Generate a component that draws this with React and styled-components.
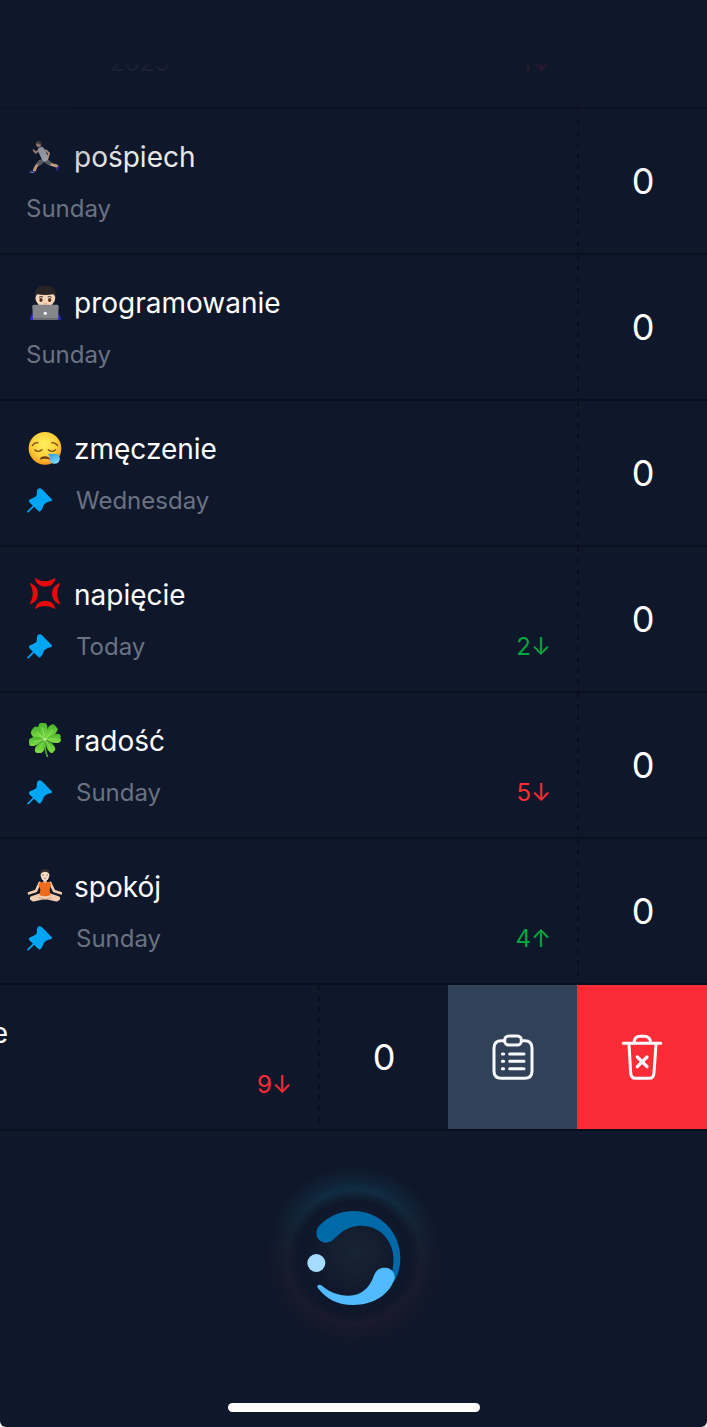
import React from "react"
import styled, { createGlobalStyle } from "styled-components"

const colors = {
  background: "#0f172a",
  line: "#080f1e",
  text: "#ffffff",
  muted: "#6a7282",
  blue: "#00a6f4",
  green: "#00a63e",
  red: "#fb2c36",
  slate: "#314158",
}

const GlobalStyle = createGlobalStyle`
  * {
    box-sizing: border-box;
  }
  body {
    margin: 0;
    background: #ffffff;
    font-family: Inter, "Liberation Sans", sans-serif;
  }
`

const Screen = styled.div`
  position: relative;
  display: flex;
  flex-direction: column;
  min-height: 100vh;
  overflow: hidden;
  background: ${colors.background};
  border-radius: 0 0 6px 6px;
`

const TopFade = styled.div`
  position: absolute;
  inset: 0 0 auto 0;
  height: 190px;
  pointer-events: none;
  background:
    radial-gradient(ellipse 120px 90px at 20px 110px, #0f172a70, #0f172a00),
    linear-gradient(#0f172a 63px, #0f172ae8 65px, #0f172ad8 76px, #0f172a70 110px, #0f172a20 150px, #0f172a00);
`

const List = styled.ul`
  list-style: none;
  margin: 0;
  padding: 0;
`

const Row = styled.li`
  display: flex;
  justify-content: flex-end;
  height: ${({ $peek }) => ($peek ? "109px" : "146px")};
  align-items: ${({ $peek }) => ($peek ? "flex-end" : "stretch")};
  overflow: hidden;
  border-bottom: 2px solid ${colors.line};
`

const Main = styled.div`
  flex: 1;
  display: flex;
  flex-direction: column;
  gap: 16px;
  padding: 30px 26px 27px ${({ $swiped }) => ($swiped ? "0" : "26px")};
`

const Title = styled.div`
  display: flex;
  align-items: center;
  gap: 12px;
  height: 36px;
  color: ${colors.text};
  font-size: 28px;
  font-weight: 400;
  line-height: 36px;
`

const ClippedTitle = styled(Title)`
  justify-content: flex-end;
  width: 8px;
`

const Details = styled.div`
  display: flex;
  align-items: center;
  gap: 24px;
  height: 35px;
  font-size: 24px;
  line-height: 35px;
`

const When = styled.span`
  color: ${colors.muted};
  padding-left: ${({ $indent }) => ($indent ? "84px" : "0")};
`

const Delta = styled.span`
  margin-left: auto;
  color: ${({ $good }) => ($good ? colors.green : colors.red)};
`

const Count = styled.div`
  flex: 0 0 130px;
  display: flex;
  align-items: center;
  justify-content: center;
  height: 144px;
  padding-left: 2px;
  color: ${colors.text};
  font-size: 36px;
  background: repeating-linear-gradient(${colors.line} 0 5px, transparent 5px 11px) 0 0 / 2px 100% no-repeat;
`

const Action = styled.button`
  flex: 0 0 ${({ $danger }) => ($danger ? "130px" : "129px")};
  display: flex;
  align-items: center;
  justify-content: center;
  padding: 0;
  border: 0;
  background: ${({ $danger }) => ($danger ? colors.red : colors.slate)};
`

const Emoji = styled.svg`
  flex: none;
  width: 36px;
  height: 36px;
`

const PinSvg = styled.svg`
  flex: none;
  width: 26px;
  height: 26px;
  fill: ${colors.blue};
`

const ActionIcon = styled.svg`
  width: 48px;
  height: 48px;
  fill: none;
  stroke: #f8fafc;
  stroke-width: 9;
  stroke-linecap: round;
  stroke-linejoin: round;
`

const Footer = styled.footer`
  flex: 1;
  display: flex;
  flex-direction: column;
  align-items: center;
  justify-content: space-between;
  padding: 19px 0 15px;
`

const OrbButton = styled.button`
  padding: 0;
  border: 0;
  background: none;
  svg {
    display: block;
    width: 210px;
    height: 200px;
  }
`

const HomeBar = styled.div`
  width: 252px;
  height: 9px;
  border-radius: 5px;
  background: #ffffff;
`

const Runner = () => (
  <Emoji viewBox="78 417 108 108">
    <g fill="none" strokeLinecap="round" strokeLinejoin="round">
      <path d="M121 447 L107 458 L101 451" stroke="#d3a685" strokeWidth="6" />
      <path d="M120 485 L108 500 L103 511" stroke="#e8b896" strokeWidth="9" />
      <path d="M139 483 L153 493 L170 498" stroke="#efbd98" strokeWidth="9" />
      <path d="M126 484 L118 490 M135 480 L147 489" stroke="#6d6e72" strokeWidth="13" />
      <path d="M124 451 L135 474" stroke="#c8ccd2" strokeWidth="20" />
      <path d="M137 451 L147 460 L143 472" stroke="#ecbc98" strokeWidth="6" />
      <path d="M91 514 L103 516 M170 510 L176 499" stroke="#3436a8" strokeWidth="5" />
      <path d="M91 517 L101 518" stroke="#b5b8c8" strokeWidth="2" />
    </g>
    <ellipse cx="116" cy="433" rx="8" ry="9" fill="#d3a384" />
    <path d="M107 430 Q107 422 117 423 Q127 424 124 438 L119 431Z" fill="#57453f" />
  </Emoji>
)

const Coder = () => (
  <Emoji viewBox="78 45 108 108">
    <path d="M90 150 Q90 132 104 130 H168 Q182 132 183 150Z" fill="#262bd0" />
    <ellipse cx="136" cy="83" rx="30" ry="28" fill="#f6d7bd" />
    <path d="M105 86 Q98 47 136 47 Q174 47 167 86 Q165 76 160 73 Q134 77 112 73 Q107 76 105 86Z" fill="#292527" />
    <path d="M117 82 Q123 78 129 81 M143 81 Q149 78 155 82" stroke="#3b2b26" strokeWidth="3" fill="none" />
    <ellipse cx="123" cy="90" rx="5" ry="6" fill="#6b3c22" />
    <ellipse cx="149" cy="90" rx="5" ry="6" fill="#6b3c22" />
    <circle cx="123" cy="90" r="2" fill="#1d1210" />
    <circle cx="149" cy="90" r="2" fill="#1d1210" />
    <path d="M131 101 Q136 103 141 101" stroke="#cf9e82" strokeWidth="3" fill="none" />
    <path d="M101 104 H172 Q176 104 176 109 L174 150 H99 L97 109 Q97 104 101 104Z" fill="#85868a" />
    <path d="M99 144 H174 V150 H99Z" fill="#6d6e73" />
    <circle cx="136" cy="130" r="5" fill="#ffffff" />
  </Emoji>
)

const Sleepy = () => (
  <Emoji viewBox="78 33 108 108">
    <defs>
      <radialGradient id="face" cx="48%" cy="38%" r="62%">
        <stop offset="0" stopColor="#fff05e" />
        <stop offset="0.6" stopColor="#ffd13b" />
        <stop offset="1" stopColor="#f59a1d" />
      </radialGradient>
      <linearGradient id="drop" x2="0.5" y2="1">
        <stop offset="0" stopColor="#2d98df" />
        <stop offset="1" stopColor="#79d8ff" />
      </linearGradient>
    </defs>
    <circle cx="135" cy="85" r="49" fill="url(#face)" />
    <g fill="none" stroke="#86511a" strokeWidth="4" strokeLinecap="round">
      <path d="M97 77 Q103 67 114 68" />
      <path d="M155 68 Q167 68 173 77" />
      <path d="M104 89 Q114 99 126 89" />
      <path d="M145 89 Q156 99 167 89" />
    </g>
    <path d="M120 119 Q121 109 135 109 Q148 109 150 119 Q136 113 120 119Z" fill="#6e4016" />
    <path d="M144 102 Q160 101 172 102 Q181 108 179 120 Q176 132 162 131 Q148 129 150 116 Q150 108 144 102Z" fill="url(#drop)" />
  </Emoji>
)

const Anger = () => (
  <Emoji viewBox="78 51 108 108" fill="#e50b0b">
    <path d="M105 55 Q106 52 109 56 Q134 71 161 56 Q165 52 166 57 Q161 79 135 80 Q109 79 105 55Z" />
    <path d="M105 146 Q106 150 109 145 Q134 131 161 145 Q165 150 166 145 Q161 123 135 122 Q109 123 105 146Z" />
    <path d="M89 70 Q91 67 95 71 Q114 80 114 101 Q113 124 93 132 Q88 134 90 129 Q108 101 89 70Z" />
    <path d="M181 70 Q179 67 175 71 Q156 80 156 101 Q157 124 177 132 Q182 134 180 129 Q162 101 181 70Z" />
  </Emoji>
)

const Clover = () => (
  <Emoji viewBox="78 39 108 108">
    <defs>
      <linearGradient id="leaf" x2="0" y2="1">
        <stop offset="0" stopColor="#48b229" />
        <stop offset="1" stopColor="#83df4a" />
      </linearGradient>
    </defs>
    <path d="M136 88 Q133 118 142 139" fill="none" stroke="#4cad36" strokeWidth="5" strokeLinecap="round" />
    <g fill="url(#leaf)">
      <path d="M135 87 C121 81 111 70 115 49 C117 40 123 33 129 37 C136 36 142 43 142 52 C142 66 137 76 135 87Z" />
      <path d="M135 88 C118 88 101 87 95 75 C90 67 95 59 101 53 C106 46 117 51 123 59 C131 68 132 78 135 88Z" />
      <path d="M136 88 C135 72 140 53 151 46 C158 40 164 42 168 51 C176 55 173 63 168 68 C160 80 148 84 136 88Z" />
      <path d="M136 88 C148 79 162 70 173 71 C181 70 184 77 181 84 C186 92 181 99 171 99 C156 100 144 94 136 88Z" />
      <path d="M134 89 C120 80 104 77 94 84 C86 86 86 94 88 98 C85 107 95 109 101 108 C116 104 126 94 134 89Z" />
      <path d="M135 90 C122 96 105 107 105 117 C103 126 109 131 116 128 C124 132 131 125 133 117 C137 106 135 98 135 90Z" />
      <path d="M137 90 C136 101 140 119 149 125 C155 132 160 129 161 124 C169 122 166 111 161 106 C154 96 146 94 137 90Z" />
    </g>
    <path d="M135 88 L127 53 M135 88 L110 67 M136 88 L158 60 M136 88 L169 87 M135 88 L101 95 M135 89 L117 116 M136 89 L152 116" stroke="#a5eb72" strokeWidth="2" fill="none" />
    <circle cx="135" cy="88" r="4" fill="#bdf58e" />
  </Emoji>
)

const Yogi = () => (
  <Emoji viewBox="78 42 108 108">
    <g fill="none" stroke="#f0cdb1" strokeLinecap="round" strokeLinejoin="round">
      <path d="M119 84 L108 108 L87 115 M151 84 L162 108 L183 115" strokeWidth="8" />
      <path d="M96 130 L120 122 L170 133 M174 130 L150 122 L100 133" strokeWidth="13" />
    </g>
    <path d="M114 128 L135 133 L157 128" stroke="#cfa286" strokeWidth="3" fill="none" />
    <path d="M130 70 H140 V84 H130Z" fill="#e7bf9f" />
    <ellipse cx="135" cy="61" rx="13" ry="17" fill="#f8dcc4" />
    <path d="M121 58 Q119 41 135 41 Q151 41 148 58 Q145 50 135 50 Q125 50 121 58Z" fill="#332a27" />
    <path d="M126 60 H132 M138 60 H144 M132 70 H138" stroke="#8d5e49" strokeWidth="2" />
    <path d="M122 80 Q127 83 129 80 Q135 88 141 80 Q145 82 148 80 L154 88 L149 104 L151 121 Q135 127 119 121 L121 104 L116 88Z" fill="#ef6c1d" />
  </Emoji>
)

const Pin = () => (
  <PinSvg viewBox="78 204 78 78" role="img" aria-label="Pinned">
    <path d="M113 208 C117 203 122 204 126 208 L154 236 C158 240 156 243 151 244 C140 247 134 251 131 256 C129 262 126 270 121 274 C118 276 115 273 112 270 L88 247 C85 243 87 239 92 237 C103 232 109 231 110 225 C111 218 110 211 113 208Z" />
    <path d="M84 275 L103 256" stroke={colors.blue} strokeWidth="5" strokeLinecap="round" />
  </PinSvg>
)

const ClipboardIcon = () => (
  <ActionIcon viewBox="146 186 144 144">
    <path d="M190 209 H183 Q161 209 161 231 V300 Q161 322 183 322 H253 Q275 322 275 300 V231 Q275 209 253 209 H247" />
    <rect x="193" y="195" width="50" height="27" rx="12" />
    <path d="M208 249 H251 M208 271 H251 M208 293 H251 M186 249 H190 M186 271 H190 M186 293 H190" />
  </ActionIcon>
)

const TrashIcon = () => (
  <ActionIcon viewBox="534 186 144 144">
    <path d="M550 217 H662" />
    <path d="M582 215 C583 202 590 196 600 196 H612 C624 196 631 203 632 215" />
    <path d="M567 220 L572 305 Q573 322 586 322 H628 Q641 322 642 305 L648 220" />
    <path d="M592 258 L621 287 M621 258 L592 287" strokeWidth="10" />
  </ActionIcon>
)

const Orb = () => (
  <svg viewBox="-4 0 630 600">
    <defs>
      <linearGradient id="tint" x2="0" y2="1">
        <stop offset="0" stopColor="#13425a" />
        <stop offset="0.15" stopColor="#13425a" />
        <stop offset="0.4" stopColor="#1a2a38" />
        <stop offset="0.6" stopColor="#21202f" />
        <stop offset="1" stopColor="#261d2c" />
      </linearGradient>
      <radialGradient id="ring">
        <stop offset="0.6" stopColor="#ffffff" stopOpacity="0" />
        <stop offset="0.68" stopColor="#ffffff" stopOpacity="0.3" />
        <stop offset="0.73" stopColor="#ffffff" stopOpacity="0.5" />
        <stop offset="0.84" stopColor="#ffffff" stopOpacity="0.25" />
        <stop offset="1" stopColor="#ffffff" stopOpacity="0" />
      </radialGradient>
      <mask id="halo">
        <circle cx="312" cy="320" r="275" fill="url(#ring)" />
      </mask>
      <radialGradient id="core">
        <stop offset="0" stopColor="#172433" />
        <stop offset="1" stopColor="#172433" stopOpacity="0" />
      </radialGradient>
    </defs>
    <circle cx="312" cy="320" r="275" fill="url(#tint)" mask="url(#halo)" />
    <circle cx="312" cy="310" r="150" fill="url(#core)" />
    <path
      fill="#0069a8"
      d="M206 228 C232 200 268 183 310 183 C388 183 450 246 450 324 C450 352 443 376 430 396 L424 372 C430 350 430 320 428 310 C420 262 382 227 333 227 C285 227 262 258 250 268 C238 281 216 282 204 267 C196 256 196 240 206 228Z"
    />
    <path
      fill="#52bbff"
      d="M213 406 C236 426 262 437 295 437 C335 437 356 412 368 384 C374 370 378 353 404 353 C424 353 434 370 433 384 C420 432 370 465 308 465 C262 465 228 447 202 413 C198 406 206 401 213 406Z"
    />
    <circle cx="198" cy="339" r="27" fill="#a5dbff" />
  </svg>
)

const items = [
  { title: "pośpiech", Icon: Runner, when: "Sunday" },
  { title: "programowanie", Icon: Coder, when: "Sunday" },
  { title: "zmęczenie", Icon: Sleepy, when: "Wednesday", pinned: true },
  { title: "napięcie", Icon: Anger, when: "Today", pinned: true, delta: "2↓", good: true },
  { title: "radość", Icon: Clover, when: "Sunday", pinned: true, delta: "5↓" },
  { title: "spokój", Icon: Yogi, when: "Sunday", pinned: true, delta: "4↑", good: true },
]

const Item = ({ title, Icon, when, pinned, delta, good }) => (
  <Row>
    <Main>
      <Title>
        <Icon />
        {title}
      </Title>
      <Details>
        {pinned && <Pin />}
        <When>{when}</When>
        {delta && <Delta $good={good}>{delta}</Delta>}
      </Details>
    </Main>
    <Count>0</Count>
  </Row>
)

export default () => {
  return (
    <Screen>
      <GlobalStyle />
      <List>
        <Row $peek>
          <Main>
            <Details>
              <When $indent>2025</When>
              <Delta>1↓</Delta>
            </Details>
          </Main>
          <Count />
        </Row>
        {items.map(item => (
          <Item key={item.title} {...item} />
        ))}
        <Row>
          <Main $swiped>
            <ClippedTitle>e</ClippedTitle>
            <Details>
              <Delta>9↓</Delta>
            </Details>
          </Main>
          <Count>0</Count>
          <Action type="button" aria-label="Details">
            <ClipboardIcon />
          </Action>
          <Action type="button" aria-label="Delete" $danger>
            <TrashIcon />
          </Action>
        </Row>
      </List>
      <Footer>
        <OrbButton type="button" aria-label="Add">
          <Orb />
        </OrbButton>
        <HomeBar />
      </Footer>
      <TopFade />
    </Screen>
  )
}
